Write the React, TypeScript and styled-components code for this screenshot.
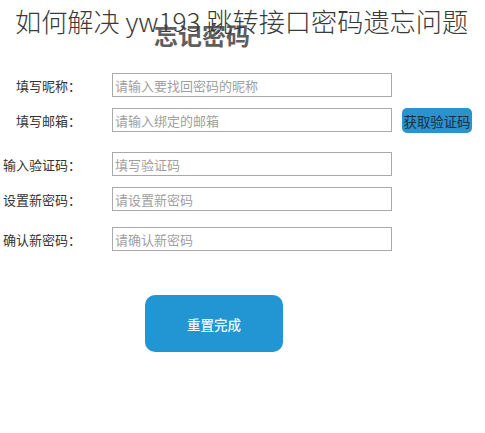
import React from "react";
import styled, { createGlobalStyle } from "styled-components";

const Global = createGlobalStyle`
  html, body { margin: 0; padding: 0; background: #fff; }
  body { font-family: "Noto Sans CJK SC", "Noto Sans", sans-serif; }
`;

const Page = styled.div`
  position: relative;
  width: 485px;
  height: 433px;
  overflow: hidden;
  background: #fff;
`;

const Title = styled.h1`
  position: absolute;
  top: 6px;
  left: 15px;
  margin: 0;
  font-size: 26.2px;
  line-height: 30px;
  font-weight: 300;
  color: #3a3a3a;
  white-space: nowrap;
  background: transparent;
`;

const Heading = styled.h2`
  margin: 0 0 0 154px;
  padding-top: 22px;
  font-size: 24px;
  line-height: 26px;
  font-weight: 700;
  color: #5e5e5e;
`;

const Form = styled.div`
  display: flex;
  flex-direction: column;
  margin-top: 25px;
`;

const Row = styled.div<{ $gap: number }>`
  display: flex;
  align-items: center;
  height: 24px;
  margin-top: ${(p) => p.$gap}px;
`;

const Label = styled.label`
  width: 81px;
  text-align: right;
  font-size: 13px;
  color: #333;
  flex: none;
  white-space: nowrap;
`;

const Input = styled.input`
  box-sizing: border-box;
  margin-left: 31px;
  width: 280px;
  height: 24px;
  border: 1px solid #a9a9a9;
  padding: 0 2px;
  font-family: "Noto Sans CJK SC", sans-serif;
  font-size: 13px;
  color: #333;
  outline: none;
  &::placeholder { color: #a0a0a0; }
`;

const CodeButton = styled.button`
  margin-left: 10px;
  width: 70px;
  height: 25px;
  margin-top: 1px;
  padding: 0;
  border: none;
  border-radius: 5px;
  background: #2a92cf;
  color: #1e2e40;
  font-family: "Noto Sans CJK SC", sans-serif;
  font-size: 13.4px;
  white-space: nowrap;
  cursor: pointer;
`;

const SubmitButton = styled.button`
  margin: 44px 0 0 145px;
  width: 138px;
  height: 57px;
  border: none;
  border-radius: 10px;
  background: #2196d3;
  color: #f2f8fc;
  font-family: "Noto Sans CJK SC", sans-serif;
  font-size: 13.5px;
  font-weight: 500;
  cursor: pointer;
`;

const rows = [
  { label: "填写昵称：", ph: "请输入要找回密码的昵称", gap: 0 },
  { label: "填写邮箱：", ph: "请输入绑定的邮箱", gap: 11, code: true },
  { label: "输入验证码：", ph: "填写验证码", gap: 20 },
  { label: "设置新密码：", ph: "请设置新密码", gap: 11 },
  { label: "确认新密码：", ph: "请确认新密码", gap: 16 },
];

export default function App() {
  return (
    <Page>
      <Global />
      <Heading>忘记密码</Heading>
      <Form>
        {rows.map((r) => (
          <Row key={r.label} $gap={r.gap}>
            <Label>{r.label}</Label>
            <Input placeholder={r.ph} />
            {r.code && <CodeButton>获取验证码</CodeButton>}
          </Row>
        ))}
      </Form>
      <SubmitButton>重置完成</SubmitButton>
      <Title>如何解决 yw193 跳转接口密码遗忘问题</Title>
    </Page>
  );
}
